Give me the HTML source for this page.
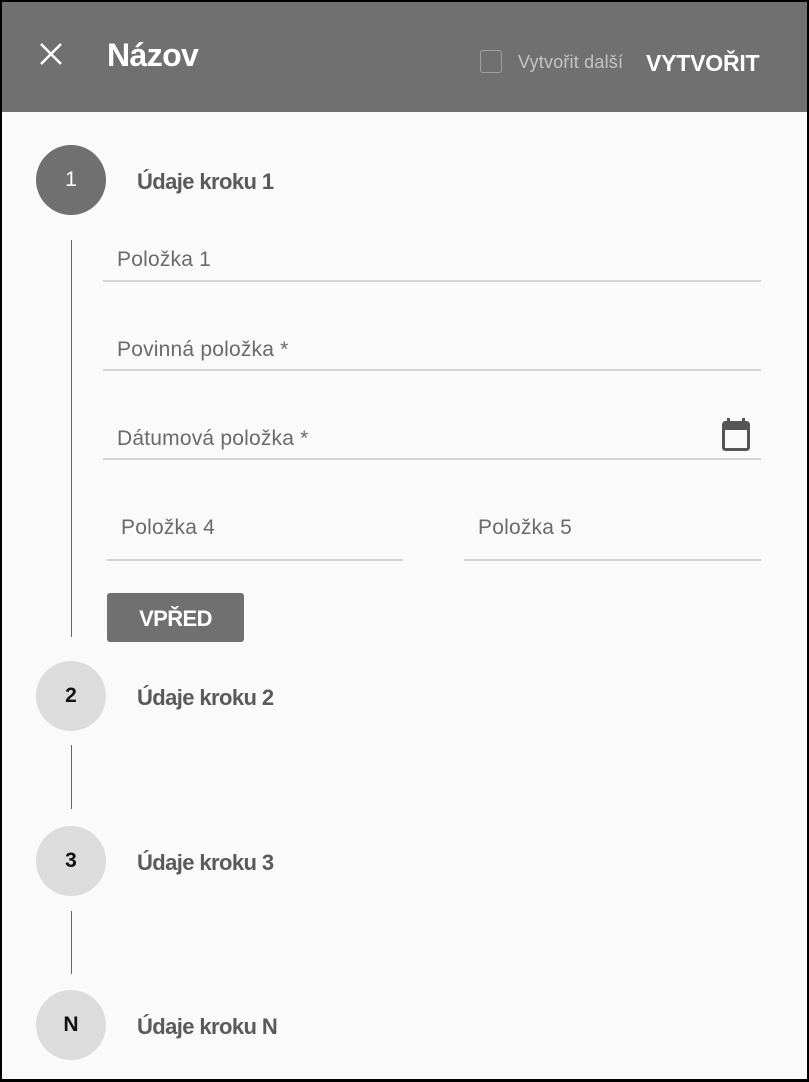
<!DOCTYPE html>
<html><head><meta charset="utf-8"><style>
*{margin:0;padding:0;box-sizing:border-box}
body{width:809px;height:1082px;background:#000;position:relative;overflow:hidden;font-family:"Liberation Sans",sans-serif}
#p{position:absolute;left:2px;top:2px;width:805px;height:1077px;background:#fafafa;overflow:hidden}
.a{position:absolute;white-space:nowrap}
.hd{position:absolute;left:0;top:0;width:805px;height:110px;background:#707070}
.c{position:absolute;width:70px;height:70px;border-radius:50%;left:34px;text-align:center;line-height:70px;font-size:21px;font-weight:bold}
.c1{background:#707070;color:#fff;font-weight:normal}
.c2{background:#dcdcdc;color:#111}
.lb{position:absolute;left:135px;font-size:22px;font-weight:bold;color:#5a5a5a;letter-spacing:-0.6px}
.vl{position:absolute;left:69px;width:1px;background:#666}
.ul{position:absolute;height:2px;background:#cfd6dc}
.fl{position:absolute;font-size:21px;color:#6a6a6a;letter-spacing:0.2px}
</style></head><body><div id="p">
<div class="hd"></div>
<svg class="a" style="left:37px;top:40px" width="24" height="24" viewBox="0 0 24 24"><path d="M2 2L22 22M22 2L2 22" stroke="#fff" stroke-width="2.6"/></svg>
<div class="a" style="left:105px;top:35px;font-size:32px;font-weight:bold;color:#fff;letter-spacing:-0.6px">Názov</div>
<div class="a" style="left:478px;top:48px;width:22px;height:23px;border:1.5px solid #a0a0a0;border-radius:3px"></div>
<div class="a" style="left:516px;top:50px;font-size:18px;color:#c4c4c4;letter-spacing:0.2px">Vytvořit další</div>
<div class="a" style="left:644px;top:48px;font-size:23px;font-weight:bold;color:#fff;letter-spacing:-0.2px">VYTVOŘIT</div>

<div class="c c1" style="top:143px">1</div>
<div class="lb" style="top:167px">Údaje kroku 1</div>
<div class="vl" style="top:238px;height:397px"></div>

<div class="fl" style="left:115px;top:246px">Položka 1</div>
<div class="ul" style="left:101px;width:658px;top:278px"></div>
<div class="fl" style="left:115px;top:336px">Povinná položka *</div>
<div class="ul" style="left:101px;width:658px;top:367px"></div>
<div class="fl" style="left:115px;top:425px">Dátumová položka *</div>
<div class="ul" style="left:101px;width:658px;top:456px"></div>
<svg class="a" style="left:720px;top:416px" width="28" height="33" viewBox="0 0 28 33"><rect x="1.5" y="4.5" width="25" height="27" rx="2" fill="none" stroke="#555" stroke-width="3"/><rect x="1" y="4" width="26" height="8" fill="#555"/><rect x="5" y="0" width="3" height="6" fill="#555"/><rect x="20" y="0" width="3" height="6" fill="#555"/></svg>
<div class="fl" style="left:119px;top:514px">Položka 4</div>
<div class="ul" style="left:105px;width:296px;top:557px"></div>
<div class="fl" style="left:476px;top:514px">Položka 5</div>
<div class="ul" style="left:462px;width:297px;top:557px"></div>
<div class="a" style="left:105px;top:591px;width:137px;height:49px;background:#707070;border-radius:3px;color:#fff;font-size:22px;font-weight:bold;text-align:center;line-height:51px;letter-spacing:-0.6px">VPŘED</div>

<div class="c c2" style="top:659px">2</div>
<div class="lb" style="top:683px">Údaje kroku 2</div>
<div class="vl" style="top:743px;height:64px"></div>
<div class="c c2" style="top:824px">3</div>
<div class="lb" style="top:848px">Údaje kroku 3</div>
<div class="vl" style="top:909px;height:63px"></div>
<div class="c c2" style="top:988px">N</div>
<div class="lb" style="top:1012px">Údaje kroku N</div>
</div></body></html>
